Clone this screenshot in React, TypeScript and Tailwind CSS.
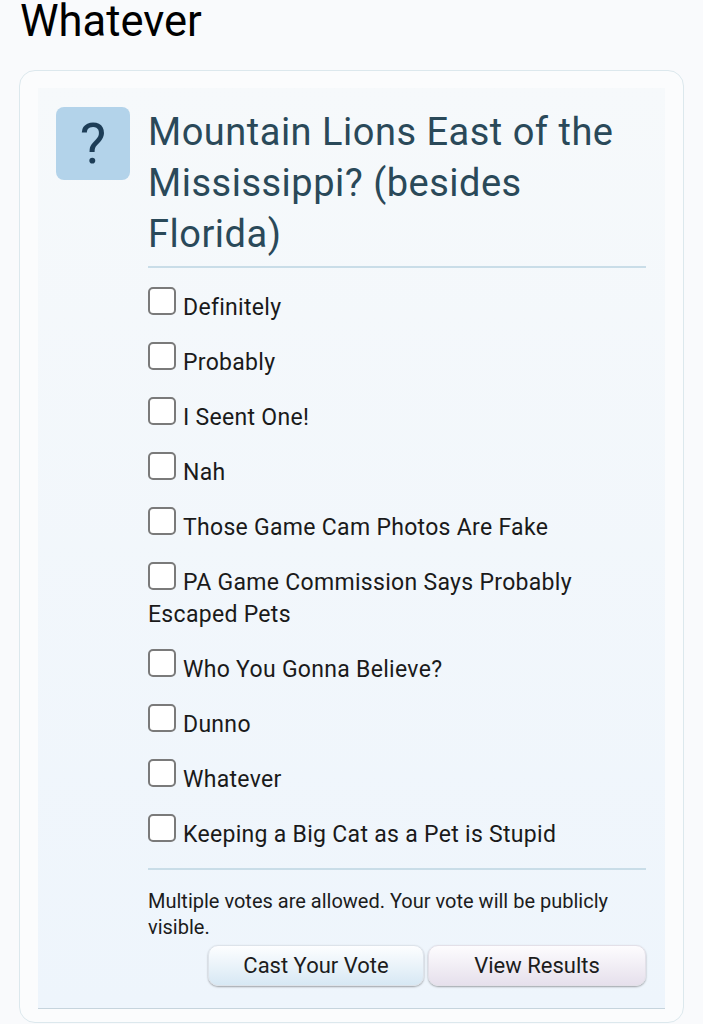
import { useState } from 'react';

const options = [
  'Definitely',
  'Probably',
  'I Seent One!',
  'Nah',
  'Those Game Cam Photos Are Fake',
  'PA Game Commission Says Probably Escaped Pets',
  'Who You Gonna Believe?',
  'Dunno',
  'Whatever',
  'Keeping a Big Cat as a Pet is Stupid',
];

function Option({ label }: { label: string }) {
  const [checked, setChecked] = useState(false);
  return (
    <label className="block text-[23px] leading-[32px] tracking-[0.3px] text-[#1a1a1a] cursor-pointer">
      <span
        onClick={() => setChecked(!checked)}
        className={`inline-block w-[28px] h-[28px] -mt-[5px] mr-[7px] rounded-[5px] border-2 border-[#7a7a7a] align-top ${
          checked ? 'bg-[#2b4a5b]' : 'bg-white'
        }`}
      />
      {label}
    </label>
  );
}

export default function App() {
  return (
    <div
      className="min-h-screen bg-[#f9fafc] px-[19px] pb-4 overflow-hidden"
      style={{ fontFamily: 'Roboto, "Liberation Sans", sans-serif' }}>
      <h1 className="pl-px text-[43.5px] leading-[44px] text-black font-normal">Whatever</h1>

      <div className="mt-[26px] rounded-[16px] border border-[#dce8ed] bg-[#fbfcfd] px-[18px] pt-[17px] pb-[13px]">
        <div className="bg-gradient-to-b from-[#f6f9fb] to-[#eef5fc] border-b border-[#c6d4dd] pl-[18px] pr-[19px] pt-[19px] pb-[22px]">
          <div className="flex">
            <div className="w-[74px] h-[73px] shrink-0 rounded-[8px] bg-[#b3d3ea] flex items-center justify-center text-[56px] leading-none text-[#1d3d57] mr-[18px]">
              ?
            </div>
            <div className="flex-1 min-w-0">
              <h2 className="text-[38px] leading-[51px] tracking-[0.5px] text-[#2a4959] font-normal pb-[6px] border-b-2 border-[#c9dde8]">
                Mountain Lions East of the Mississippi? (besides Florida)
              </h2>

              <div className="pt-[24px] pb-[17px] flex flex-col gap-[23px] border-b-2 border-[#c9dde8]">
                {options.map((o) => (
                  <Option key={o} label={o} />
                ))}
              </div>

              <p className="pt-[18px] text-[20px] leading-[26px] text-[#1c1c1c]">
                Multiple votes are allowed. Your vote will be publicly visible.
              </p>

              <div className="mt-[5px] flex justify-end gap-[4px]">
                <button className="w-[216px] h-[41px] rounded-[10px] border border-[#dde3ea] bg-gradient-to-b from-[#fdfeff] to-[#d7e8f4] shadow-[0_1px_2px_rgba(0,0,0,0.35)] text-[22px] text-[#1c1c1c]">
                  Cast Your Vote
                </button>
                <button className="w-[218px] h-[41px] rounded-[10px] border border-[#e3e0e8] bg-gradient-to-b from-[#fdfcfe] to-[#e6e0ec] shadow-[0_1px_2px_rgba(0,0,0,0.35)] text-[22px] text-[#1c1c1c]">
                  View Results
                </button>
              </div>
            </div>
          </div>
        </div>
      </div>
    </div>
  );
}
